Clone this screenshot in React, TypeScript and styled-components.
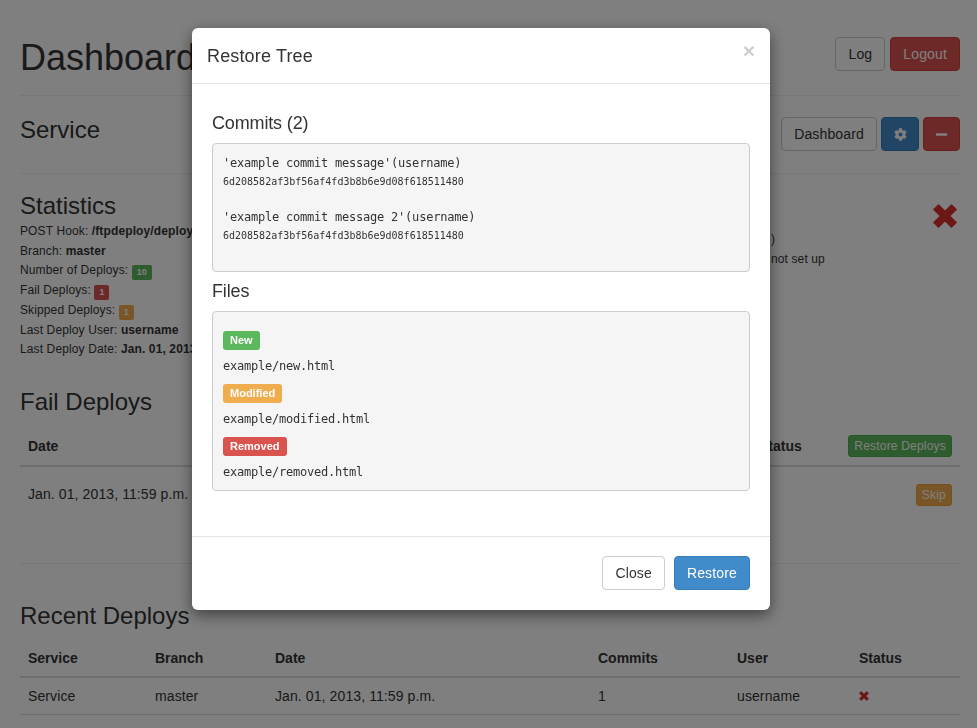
import React from "react";
import styled, { createGlobalStyle, css } from "styled-components";
import { FaCog, FaMinus } from "react-icons/fa";

type Tone = "default" | "primary" | "danger" | "success" | "warning";

const toneColors: Record<Tone, { bg: string; border: string; color: string }> = {
  default: { bg: "#fff", border: "#ccc", color: "#333" },
  primary: { bg: "#428bca", border: "#357ebd", color: "#fff" },
  danger: { bg: "#d9534f", border: "#d43f3a", color: "#fff" },
  success: { bg: "#5cb85c", border: "#4cae4c", color: "#fff" },
  warning: { bg: "#f0ad4e", border: "#eea236", color: "#fff" },
};

const GlobalStyle = createGlobalStyle`
  html, body {
    margin: 0;
    padding: 0;
    height: 100%;
    overflow: hidden;
    background: #fff;
    color: #333;
    font-family: "Liberation Sans", Arial, sans-serif;
    font-size: 14px;
    line-height: 20px;
  }
`;

const Page = styled.div`
  width: 940px;
  margin-left: 20px;
  padding-top: 37px;
`;

const TopRow = styled.header`
  display: flex;
  justify-content: space-between;
  align-items: center;
  height: 34px;
  margin-bottom: 24px;
`;

const ServiceRow = styled.section`
  display: flex;
  justify-content: space-between;
  align-items: center;
  height: 34px;
  margin: 21px 0 22px;
`;

const Title = styled.h1`
  margin: 8px 0 0;
  font-size: 36px;
  font-weight: 400;
  line-height: 40px;
`;

const Heading = styled.h2<{ $top?: number; $bottom?: number }>`
  margin: ${(p) => p.$top ?? 0}px 0 ${(p) => p.$bottom ?? 0}px;
  font-size: 24px;
  font-weight: 400;
  line-height: 26px;
`;

const Rule = styled.hr<{ $top?: number }>`
  margin: ${(p) => p.$top ?? 0}px 0 0;
  height: 1px;
  border: 0;
  background: #eee;
`;

const ButtonGroup = styled.div<{ $gap: number }>`
  display: flex;
  gap: ${(p) => p.$gap}px;
`;

const Button = styled.button<{ $tone?: Tone; $small?: boolean; $square?: number }>`
  display: inline-flex;
  align-items: center;
  justify-content: center;
  box-sizing: border-box;
  height: 34px;
  padding: 0 12px;
  border: 1px solid ${(p) => toneColors[p.$tone ?? "default"].border};
  border-radius: 4px;
  background: ${(p) => toneColors[p.$tone ?? "default"].bg};
  color: ${(p) => toneColors[p.$tone ?? "default"].color};
  font-family: inherit;
  font-size: 14px;
  letter-spacing: 0.15px;
  white-space: nowrap;
  ${(p) =>
    p.$small &&
    css`
      height: 22px;
      padding: 0 5px;
      border-radius: 3px;
      font-size: 12px;
      letter-spacing: 0.2px;
      vertical-align: top;
    `}
  ${(p) =>
    p.$square &&
    css`
      width: ${p.$square}px;
      padding: 0;
      font-size: 13px;
    `}
`;

const StatsBlock = styled.section`
  display: flex;
  justify-content: space-between;
  margin-top: 19px;
`;

const StatsLeft = styled.div`
  flex: 1;
  white-space: nowrap;
`;

const StatLine = styled.div`
  font-size: 12px;
  letter-spacing: 0.12px;
  line-height: 19.7px;
`;

const StatsRight = styled.div`
  width: 161px;
  padding-top: 36px;
  font-size: 12px;
  letter-spacing: 0.12px;
  line-height: 20px;
`;

const StatusMark = styled.div`
  box-sizing: border-box;
  width: 28px;
  padding: 11px 3px 0 1px;
  line-height: 0;
`;

const CrossIcon = styled.svg<{ $size: number }>`
  width: ${(p) => p.$size}px;
  height: ${(p) => p.$size}px;
  fill: #d9302c;
  stroke: #d9302c;
  stroke-width: 1.5;
  stroke-linejoin: round;
`;

const Cross = ({ size }: { size: number }) => (
  <CrossIcon $size={size} viewBox="0 0 24 24">
    <polygon points="5.5,1 12,7.5 18.500,1 23,5.500 16.500,12 23,18.500 18.500,23 12,16.500 5.500,23 1,18.500 7.500,12 1,5.500" />
  </CrossIcon>
);

const Badge = styled.span<{ $tone: Tone }>`
  display: inline-block;
  box-sizing: border-box;
  height: 15px;
  padding: 0 5px;
  border-radius: 2px;
  background: ${(p) => toneColors[p.$tone].bg};
  color: #fff;
  font-size: 9px;
  font-weight: 700;
  letter-spacing: 0;
  line-height: 15px;
  vertical-align: -1px;
`;

const Table = styled.table<{ $top: number }>`
  width: 100%;
  margin-top: ${(p) => p.$top}px;
  border-collapse: collapse;
  table-layout: fixed;
`;

const Th = styled.th<{ $width?: number; $right?: boolean }>`
  box-sizing: border-box;
  width: ${(p) => (p.$width ? `${p.$width}px` : "auto")};
  padding: 8px;
  border-bottom: 2px solid #ddd;
  font-size: 14px;
  font-weight: 700;
  line-height: 20px;
  text-align: ${(p) => (p.$right ? "right" : "left")};
`;

const Td = styled.td<{ $tall?: boolean; $right?: boolean; $ruled?: boolean }>`
  padding: ${(p) => (p.$tall ? "17px 8px 19px" : "8px")};
  border-bottom: ${(p) => (p.$ruled ? "1px solid #ddd" : "0")};
  font-size: 14px;
  letter-spacing: 0.1px;
  line-height: 20px;
  text-align: ${(p) => (p.$right ? "right" : "left")};
  vertical-align: top;
`;

const Backdrop = styled.div`
  position: fixed;
  inset: 0;
  box-sizing: border-box;
  padding: 28px 0 0 192px;
  background: rgba(0, 0, 0, 0.5);
`;

const Modal = styled.div`
  width: 578px;
  border-radius: 6px;
  background: #fff;
  box-shadow: 0 5px 15px rgba(0, 0, 0, 0.5);
`;

const ModalHeader = styled.div`
  display: flex;
  justify-content: space-between;
  align-items: flex-start;
  box-sizing: border-box;
  height: 56px;
  padding: 15px;
  border-bottom: 1px solid #e5e5e5;
`;

const ModalTitle = styled.h4`
  margin: 0;
  font-size: 18px;
  font-weight: 400;
  letter-spacing: 0.15px;
  line-height: 26px;
`;

const CloseMark = styled.span`
  margin-top: -6px;
  padding-top: 3px;
  color: #000;
  opacity: 0.2;
  font-size: 21px;
  font-weight: 700;
  line-height: 21px;
`;

const ModalBody = styled.div`
  padding: 29px 20px 45px;
`;

const SectionTitle = styled.h4<{ $top?: number }>`
  margin: ${(p) => p.$top ?? 0}px 0 10px;
  font-size: 18px;
  font-weight: 400;
  letter-spacing: -0.15px;
  line-height: 20px;
`;

const Well = styled.div<{ $padTop: number; $padBottom: number }>`
  padding: ${(p) => p.$padTop}px 10px ${(p) => p.$padBottom}px;
  border: 1px solid #ccc;
  border-radius: 4px;
  background: #f5f5f5;
  font-family: "DejaVu Sans Mono", "Liberation Mono", monospace;
  color: #333;
`;

const CommitEntry = styled.div`
  margin-bottom: 16px;
`;

const CommitMessage = styled.div`
  font-size: 12px;
  letter-spacing: -0.22px;
  line-height: 18px;
`;

const CommitHash = styled.div`
  font-size: 10px;
  line-height: 20px;
`;

const FileEntry = styled.div`
  margin-bottom: 9px;

  &:last-child {
    margin-bottom: 0;
  }
`;

const FileLabel = styled.span<{ $tone: Tone }>`
  display: block;
  width: fit-content;
  height: 19px;
  margin: 0 0 7px;
  padding: 0 7px;
  border-radius: 3px;
  background: ${(p) => toneColors[p.$tone].bg};
  color: #fff;
  font-family: "Liberation Sans", Arial, sans-serif;
  font-size: 11px;
  font-weight: 700;
  line-height: 18px;
`;

const FileName = styled.div`
  font-size: 12px;
  letter-spacing: -0.22px;
  line-height: 18px;
`;

const ModalFooter = styled.div`
  display: flex;
  justify-content: flex-end;
  gap: 9px;
  padding: 19px 20px 20px;
  border-top: 1px solid #e5e5e5;
`;

const commits = [
  { message: "'example commit message'(username)", hash: "6d208582af3bf56af4fd3b8b6e9d08f618511480" },
  { message: "'example commit message 2'(username)", hash: "6d208582af3bf56af4fd3b8b6e9d08f618511480" },
];

const files: { label: string; tone: Tone; path: string }[] = [
  { label: "New", tone: "success", path: "example/new.html" },
  { label: "Modified", tone: "warning", path: "example/modified.html" },
  { label: "Removed", tone: "danger", path: "example/removed.html" },
];

export default function App() {
  return (
    <>
      <GlobalStyle />
      <Page>
        <TopRow>
          <Title>Dashboard</Title>
          <ButtonGroup $gap={5}>
            <Button>Log</Button>
            <Button $tone="danger">Logout</Button>
          </ButtonGroup>
        </TopRow>
        <Rule />
        <ServiceRow>
          <Heading $bottom={8}>Service</Heading>
          <ButtonGroup $gap={4}>
            <Button>Dashboard</Button>
            <Button $tone="primary" $square={38}>
              <FaCog />
            </Button>
            <Button $tone="danger" $square={37}>
              <FaMinus />
            </Button>
          </ButtonGroup>
        </ServiceRow>
        <Rule />
        <StatsBlock>
          <StatsLeft>
            <Heading $bottom={3}>Statistics</Heading>
            <StatLine>
              POST Hook: <b>/ftpdeploy/deploy/U</b>
            </StatLine>
            <StatLine>
              Branch: <b>master</b>
            </StatLine>
            <StatLine>
              Number of Deploys: <Badge $tone="success">10</Badge>
            </StatLine>
            <StatLine>
              Fail Deploys: <Badge $tone="danger">1</Badge>
            </StatLine>
            <StatLine>
              Skipped Deploys: <Badge $tone="warning">1</Badge>
            </StatLine>
            <StatLine>
              Last Deploy User: <b>username</b>
            </StatLine>
            <StatLine>
              Last Deploy Date: <b>Jan. 01, 2013, 11:59 p.m.</b>
            </StatLine>
          </StatsLeft>
          <StatsRight>
            <div>)</div>
            <div>not set up</div>
          </StatsRight>
          <StatusMark>
            <Cross size={24} />
          </StatusMark>
        </StatsBlock>

        <Heading $top={29}>Fail Deploys</Heading>
        <Table $top={12}>
          <thead>
            <tr>
              <Th>Date</Th>
              <Th $width={89}>Status</Th>
              <Th $width={120} $right>
                <Button $tone="success" $small>
                  Restore Deploys
                </Button>
              </Th>
            </tr>
          </thead>
          <tbody>
            <tr>
              <Td $tall>Jan. 01, 2013, 11:59 p.m.</Td>
              <Td $tall />
              <Td $tall $right>
                <Button $tone="warning" $small>
                  Skip
                </Button>
              </Td>
            </tr>
          </tbody>
        </Table>
        <Rule $top={38} />

        <Heading $top={39}>Recent Deploys</Heading>
        <Table $top={11}>
          <thead>
            <tr>
              <Th $width={127}>Service</Th>
              <Th $width={120}>Branch</Th>
              <Th $width={323}>Date</Th>
              <Th $width={139}>Commits</Th>
              <Th $width={122}>User</Th>
              <Th>Status</Th>
            </tr>
          </thead>
          <tbody>
            <tr>
              <Td $ruled>Service</Td>
              <Td $ruled>master</Td>
              <Td $ruled>Jan. 01, 2013, 11:59 p.m.</Td>
              <Td $ruled>1</Td>
              <Td $ruled>username</Td>
              <Td $ruled>
                <Cross size={10} />
              </Td>
            </tr>
          </tbody>
        </Table>
      </Page>

      <Backdrop>
        <Modal>
          <ModalHeader>
            <ModalTitle>Restore Tree</ModalTitle>
            <CloseMark>×</CloseMark>
          </ModalHeader>
          <ModalBody>
            <SectionTitle>Commits (2)</SectionTitle>
            <Well $padTop={10} $padBottom={9}>
              {commits.map((commit, index) => (
                <CommitEntry key={index}>
                  <CommitMessage>{commit.message}</CommitMessage>
                  <CommitHash>{commit.hash}</CommitHash>
                </CommitEntry>
              ))}
            </Well>
            <SectionTitle $top={9}>Files</SectionTitle>
            <Well $padTop={19} $padBottom={9}>
              {files.map((file) => (
                <FileEntry key={file.path}>
                  <FileLabel $tone={file.tone}>{file.label}</FileLabel>
                  <FileName>{file.path}</FileName>
                </FileEntry>
              ))}
            </Well>
          </ModalBody>
          <ModalFooter>
            <Button>Close</Button>
            <Button $tone="primary">Restore</Button>
          </ModalFooter>
        </Modal>
      </Backdrop>
    </>
  );
}
